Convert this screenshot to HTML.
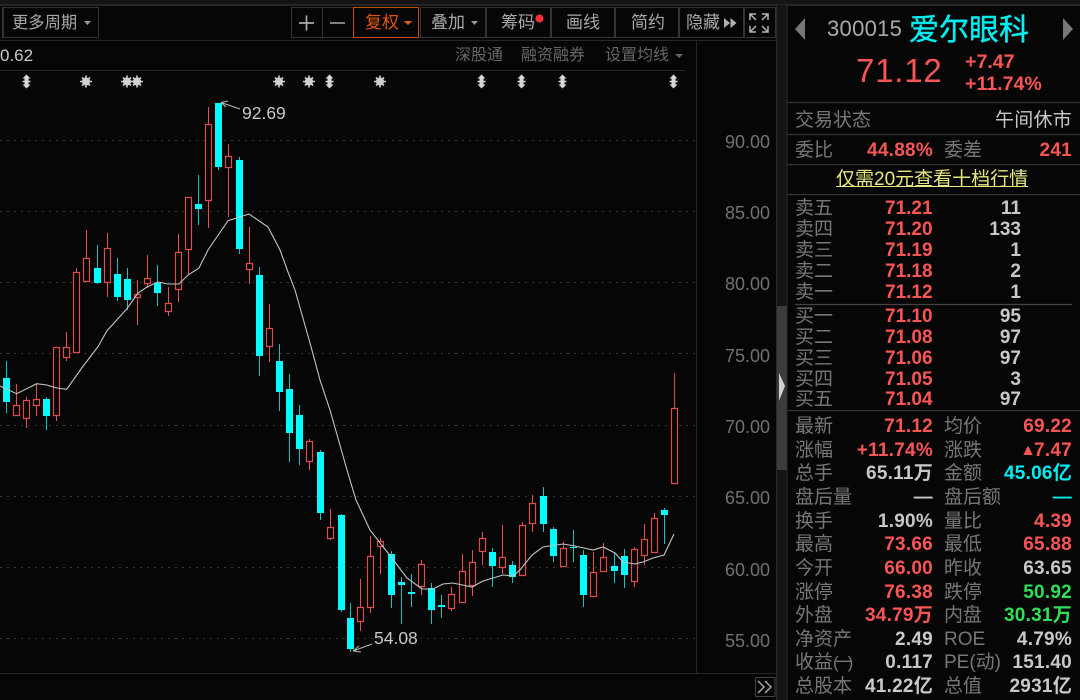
<!DOCTYPE html>
<html lang="zh">
<head>
<meta charset="utf-8">
<title>爱尔眼科 300015</title>
<style>
html,body{margin:0;padding:0;background:#060606;}
body{position:relative;width:1080px;height:700px;overflow:hidden;font-family:"Liberation Sans","Noto Sans CJK SC",sans-serif;color:#aaa;}
svg.g{position:absolute;left:0;top:0;}
.t{position:absolute;white-space:nowrap;}
.tb{font-size:17px;line-height:24px;top:11px;color:#a8a8a8;}
.s2{font-size:16px;line-height:24px;top:44px;color:#666;}
.ax{left:725px;font-size:18px;line-height:24px;color:#717171;}
.an{font-size:17.500px;line-height:24px;color:#c8c8c8;}
.r{position:absolute;left:795px;width:277px;height:24px;margin-top:1px;line-height:24px;font-size:19px;color:#777;white-space:nowrap;}
.r span{position:absolute;top:0;}
.a{left:0;}
.b{right:139px;font-weight:bold;letter-spacing:.25px;}
.c{left:149px;}
.d{right:0;font-weight:bold;letter-spacing:.25px;}
.R{color:#f95555;}
.W{color:#c8c8c8;}
.C{color:#00eef0;}
.G{color:#2fe055;}
.p{left:90px;font-weight:bold;color:#f95555;}
.q{right:51px;font-weight:bold;color:#c8c8c8;}
.tri{font-size:16px;position:static!important;letter-spacing:-2px;vertical-align:1px;}
.par{position:static!important;letter-spacing:-4px;font-size:17px;}
</style>
</head>
<body>
<svg class="g" width="1080" height="700" viewBox="0 0 1080 700">
<defs>
<g id="st"><circle r="4" fill="#d0d0d0"/><path d="M0-6V6M-6 0H6M-4-4L4 4M-4 4L4-4" stroke="#d0d0d0" stroke-width="1.6"/></g>
<path id="ud" d="M0-7L4-3H2V-.8H4V.8H2V3H4L0 7L-4 3H-2V.8H-4V-.8H-2V-3H-4Z" fill="#d8d8d8"/>
</defs>
<!-- frame -->
<rect x="0" y="0" width="1080" height="4" fill="#141414"/>
<rect x="0" y="4" width="1080" height="2" fill="#262626"/>
<rect x="777" y="5" width="10" height="695" fill="#151515"/>
<rect x="776" y="306" width="11" height="164" fill="#3c3c3c"/>
<path d="M779 373L785 386L779 401Z" fill="#d0d0d0"/>
<path d="M776.500 5V700M787 5V700" stroke="#2a2a2a" stroke-width="1"/>
<path d="M0 40.500H776M0 70.500H685M696.500 40V673M0 673.500H776" stroke="#262626" stroke-width="1"/>
<!-- toolbar boxes -->
<g fill="none" stroke="#333" stroke-width="1">
<path d="M2.500 7V38"/>
<rect x="3.500" y="7.500" width="95" height="30"/>
<rect x="291.500" y="7.500" width="31" height="30"/>
<rect x="322.500" y="7.500" width="31" height="30"/>
<rect x="420.500" y="7.500" width="65" height="30"/>
<rect x="486.500" y="7.500" width="64" height="30"/>
<rect x="551.500" y="7.500" width="63" height="30"/>
<rect x="615.500" y="7.500" width="63" height="30"/>
<rect x="679.500" y="7.500" width="64" height="30"/>
<rect x="744.500" y="7.500" width="31" height="30"/>
</g>
<rect x="353.500" y="7.500" width="65" height="30" fill="none" stroke="#c4500f"/>
<path d="M299 23H314M306.500 15.500V30.500" stroke="#aaa" stroke-width="1.700"/>
<path d="M330 23H345" stroke="#999" stroke-width="1.700"/>
<path d="M84 21H91L87.500 25Z" fill="#999"/>
<path d="M404 21H412L408 25Z" fill="#e8600f"/>
<path d="M471 21H478L474.500 25Z" fill="#999"/>
<circle cx="539.500" cy="18.500" r="4" fill="#f5303a"/>
<path d="M724 18L730 23L724 28ZM730.500 18L736.500 23L730.500 28Z" fill="#b0b0b0"/>
<path d="M750 20V14H756M750 14L756 20M768 20V14H762M768 14L762 20M750 26V32H756M750 32L756 26M768 26V32H762M768 32L762 26" fill="none" stroke="#b4b4b4" stroke-width="1.500"/>
<path d="M675 54H683L679 58Z" fill="#666"/>
<!-- markers -->
<use href="#ud" x="26.500" y="81.500"/><use href="#st" x="86" y="81.500"/><use href="#st" x="127" y="81.500"/><use href="#st" x="137" y="81.500"/><use href="#st" x="279" y="81.500"/><use href="#st" x="309" y="81.500"/><use href="#ud" x="329.500" y="81.500"/><use href="#st" x="380" y="81.500"/><use href="#ud" x="481.500" y="81.500"/><use href="#ud" x="521.500" y="81.500"/><use href="#ud" x="562.500" y="81.500"/><use href="#ud" x="673.500" y="81.500"/>
<!-- grid -->
<path d="M0 140.500H700M0 211.500H700M0 282.500H700M0 353.500H700M0 425.500H700M0 496.500H700M0 567.500H700M0 638.500H700" stroke="#363636" stroke-width="1" stroke-dasharray="2 5"/>
<!-- red wicks -->
<path fill="none" stroke="#e85050" stroke-width="1" d="M16.500 384V405M26.500 397V400M26.500 418V428M36.500 384V399M36.500 405V416M56.500 415V421M66.500 332V347M66.500 357V361M76.500 268V272M86.500 230V258M107.500 233V248M107.500 282V297M137.500 280V294M137.500 297V325M147.500 255V278M147.500 283V288M168.500 287V303M168.500 311V316M178.500 234V252M178.500 289V302M188.500 249V275M208.500 107V124M208.500 200V228M228.500 144V156M228.500 167V217M249.500 227V263M249.500 269V284M269.500 304V328M269.500 346V362M309.500 439V441M309.500 461V470M330.500 509V527M330.500 538V540M360.500 579V607M360.500 621V631M370.500 536V556M370.500 607V613M380.500 538V541M380.500 546V574M421.500 560V564M421.500 586V595M451.500 587V594M451.500 608V611M462.500 554V571M462.500 602V603M472.500 550V562M472.500 585V596M482.500 532V538M482.500 551V565M502.500 525V557M502.500 567V574M522.500 522V525M532.500 495V503M532.500 523V532M563.500 542V548M563.500 566V567M593.500 552V572M593.500 596V597M603.500 543V557M603.500 571V572M634.500 547V549M634.500 581V587M644.500 524V539M644.500 555V565M654.500 513V518M654.500 552V553"/>
<path fill="none" stroke="#c04444" stroke-width="1.200" d="M674.500 373V408"/>
<!-- red bodies -->
<path fill="#070707" stroke="#e04c4c" stroke-width="1.150" d="M13.500 405.500h6v10h-6zM23.500 400.500h6v18h-6zM33.500 399.500h6v6h-6zM53.500 347.500h6v68h-6zM63.500 347.500h6v10h-6zM73.500 272.500h6v80h-6zM83.500 258.500h6v23h-6zM104.500 248.500h6v34h-6zM134.500 294.500h6v3h-6zM144.500 278.500h6v5h-6zM165.500 303.500h6v8h-6zM175.500 252.500h6v37h-6zM185.500 197.500h6v52h-6zM205.500 124.500h6v76h-6zM225.500 156.500h6v11h-6zM246.500 263.500h6v6h-6zM266.500 328.500h6v18h-6zM306.500 441.500h6v20h-6zM327.500 527.500h6v11h-6zM357.500 607.500h6v14h-6zM367.500 556.500h6v51h-6zM377.500 541.500h6v5h-6zM418.500 564.500h6v22h-6zM448.500 594.500h6v14h-6zM459.500 571.500h6v31h-6zM469.500 562.500h6v23h-6zM479.500 538.500h6v13h-6zM499.500 557.500h6v10h-6zM519.500 525.500h6v50h-6zM529.500 503.500h6v20h-6zM560.500 548.500h6v18h-6zM590.500 572.500h6v24h-6zM600.500 557.500h6v14h-6zM631.500 549.500h6v32h-6zM641.500 539.500h6v16h-6zM651.500 518.500h6v34h-6zM671.500 408.500h6v75h-6z"/>
<!-- cyan wicks -->
<path fill="none" stroke="#00c8c8" stroke-width="1" d="M6.500 361V413M46.500 397V430M97.500 245V284M117.500 258V301M127.500 268V310M157.500 265V306M198.500 175V225M218.500 103V170M239.500 157V254M259.500 267V376M279.500 344V411M289.500 374V462M299.500 405V465M320.500 450V520M341.500 514V612M350.500 603V652M391.500 551V608M401.500 577V624M411.500 574V607M431.500 583V624M441.500 595V618M492.500 548V587M512.500 561V583M543.500 487V532M553.500 527V562M573.500 530V562M583.500 550V607M614.500 553V583M624.500 549V588M664.500 508V544"/>
<!-- cyan bodies -->
<path fill="#00ffff" d="M3 378h7v24h-7zM43 399h7v17h-7zM94 268h7v15h-7zM114 274h7v23h-7zM124 279h7v21h-7zM154 283h7v10h-7zM195 204h7v5h-7zM215 103h7v64h-7zM236 160h7v89h-7zM256 275h7v81h-7zM276 361h7v31h-7zM286 389h7v44h-7zM296 415h7v34h-7zM317 452h7v61h-7zM338 515h7v95h-7zM347 618h7v31h-7zM388 554h7v41h-7zM398 582h7v3h-7zM408 592h7v2h-7zM428 588h7v22h-7zM438 605h7v2h-7zM489 552h7v14h-7zM509 565h7v12h-7zM540 496h7v28h-7zM550 529h7v27h-7zM570 547h7v1h-7zM580 555h7v40h-7zM611 566h7v5h-7zM621 556h7v19h-7zM661 510h7v5h-7z"/>
<!-- MA -->
<polyline fill="none" stroke="#c4c4c4" stroke-width="1.100" points="0,386 16.700,393.700 36.700,383.700 46.700,385 56.700,388 66.700,389.300 81.700,368 98,346.700 107,330.700 126.700,309 138,293 147,287 158,282 168,284 179,284 188,275 199,268 208,250 228,220.700 249,214 268,227 280,250 288,272 295,290 310,343 320,380 330,410 347,470 356,500 370,530 388,553 407,578 422,589 433,589 443,584 453,583 472,587 483,581 493,578 503,575 513,576 520,570 532,555 543,547 563,544 575,546 593,550 603,547 615,553 623,562 635,564 643,562 653,558 664,555 674,534"/>
<!-- annotation arrows -->
<path d="M240 109L221 102.500M221 102.500L228 101M221 102.500L226 107" fill="none" stroke="#b8b8b8" stroke-width="1"/>
<path d="M372 644L353 651M353 651L359 646M353 651L361 652" fill="none" stroke="#b8b8b8" stroke-width="1"/>
<!-- bottom >> -->
<rect x="755.500" y="677.500" width="19.500" height="19" rx="1" fill="none" stroke="#444"/>
<path d="M758 681L764 687L758 693M765 681L771 687L765 693" fill="none" stroke="#a8a8a8" stroke-width="1.500"/>
<!-- right panel -->
<path d="M805 18V40L795 29Z" fill="#777"/>
<path d="M1063 18V40L1073 29Z" fill="#777"/>
<path d="M787 102.500H1080M787 134.500H1080M787 164.500H1080M787 194.500H1080M787 410.500H1080" stroke="#333" stroke-width="1.300"/>
<path d="M795 304.500H1072" stroke="#444" stroke-width="1.300"/>
</svg>

<!-- toolbar text -->
<div class="t tb" style="left:12px;font-size:16.300px;">更多周期</div>
<div class="t tb" style="left:365px;color:#e0580f;">复权</div>
<div class="t tb" style="left:431px;">叠加</div>
<div class="t tb" style="left:501px;">筹码</div>
<div class="t tb" style="left:566px;">画线</div>
<div class="t tb" style="left:631px;">简约</div>
<div class="t tb" style="left:686px;">隐藏</div>
<div class="t s2" style="left:455px;">深股通</div>
<div class="t s2" style="left:521px;">融资融券</div>
<div class="t s2" style="left:605px;">设置均线</div>
<div class="t" style="left:0;top:44px;font-size:17px;line-height:24px;color:#c8c8c8;">0.62</div>

<!-- axis -->
<div class="t ax" style="top:130px;">90.00</div>
<div class="t ax" style="top:201px;">85.00</div>
<div class="t ax" style="top:272px;">80.00</div>
<div class="t ax" style="top:344px;">75.00</div>
<div class="t ax" style="top:415px;">70.00</div>
<div class="t ax" style="top:486px;">65.00</div>
<div class="t ax" style="top:558px;">60.00</div>
<div class="t ax" style="top:629px;">55.00</div>
<div class="t an" style="left:242px;top:101px;">92.69</div>
<div class="t an" style="left:374px;top:626px;">54.08</div>

<!-- right header -->
<div class="t" style="left:827px;top:15px;font-size:22px;line-height:28px;letter-spacing:.3px;color:#aaa;">300015</div>
<div class="t" style="left:909px;top:11px;font-size:30px;line-height:40px;-webkit-text-stroke:.4px #00eef0;color:#00eef0;">爱尔眼科</div>
<div class="t" style="left:856px;top:51px;font-size:33px;line-height:40px;letter-spacing:.8px;color:#f95555;">71.12</div>
<div class="t" style="left:965px;top:51px;font-size:19.600px;line-height:22px;font-weight:bold;color:#f95555;">+7.47</div>
<div class="t" style="left:965px;top:73px;font-size:19.600px;line-height:22px;font-weight:bold;color:#f95555;">+11.74%</div>

<div class="r" style="top:108px;"><span class="a">交易状态</span><span class="d W" style="font-weight:normal;">午间休市</span></div>
<div class="r" style="top:138px;"><span class="a">委比</span><span class="b R">44.88%</span><span class="c">委差</span><span class="d R">241</span></div>
<div class="t" style="left:836px;top:168px;font-size:19px;line-height:24px;color:#e8e880;text-decoration:underline;">仅需20元查看十档行情</div>

<!-- order book -->
<div class="r" style="top:196px;"><span class="a">卖五</span><span class="p">71.21</span><span class="q">11</span></div>
<div class="r" style="top:217px;"><span class="a">卖四</span><span class="p">71.20</span><span class="q">133</span></div>
<div class="r" style="top:238px;"><span class="a">卖三</span><span class="p">71.19</span><span class="q">1</span></div>
<div class="r" style="top:259px;"><span class="a">卖二</span><span class="p">71.18</span><span class="q">2</span></div>
<div class="r" style="top:280px;"><span class="a">卖一</span><span class="p">71.12</span><span class="q">1</span></div>
<div class="r" style="top:304px;"><span class="a">买一</span><span class="p">71.10</span><span class="q">95</span></div>
<div class="r" style="top:325px;"><span class="a">买二</span><span class="p">71.08</span><span class="q">97</span></div>
<div class="r" style="top:346px;"><span class="a">买三</span><span class="p">71.06</span><span class="q">97</span></div>
<div class="r" style="top:367px;"><span class="a">买四</span><span class="p">71.05</span><span class="q">3</span></div>
<div class="r" style="top:387px;"><span class="a">买五</span><span class="p">71.04</span><span class="q">97</span></div>

<!-- stats -->
<div class="r" style="top:414px;"><span class="a">最新</span><span class="b R">71.12</span><span class="c">均价</span><span class="d R">69.22</span></div>
<div class="r" style="top:438px;"><span class="a">涨幅</span><span class="b R">+11.74%</span><span class="c">涨跌</span><span class="d R"><span class="tri">▲</span>7.47</span></div>
<div class="r" style="top:461px;"><span class="a">总手</span><span class="b W">65.11万</span><span class="c">金额</span><span class="d C">45.06亿</span></div>
<div class="r" style="top:485px;"><span class="a">盘后量</span><span class="b W">—</span><span class="c">盘后额</span><span class="d C">—</span></div>
<div class="r" style="top:509px;"><span class="a">换手</span><span class="b W">1.90%</span><span class="c">量比</span><span class="d R">4.39</span></div>
<div class="r" style="top:532px;"><span class="a">最高</span><span class="b R">73.66</span><span class="c">最低</span><span class="d R">65.88</span></div>
<div class="r" style="top:556px;"><span class="a">今开</span><span class="b R">66.00</span><span class="c">昨收</span><span class="d W">63.65</span></div>
<div class="r" style="top:580px;"><span class="a">涨停</span><span class="b R">76.38</span><span class="c">跌停</span><span class="d G">50.92</span></div>
<div class="r" style="top:603px;"><span class="a">外盘</span><span class="b R">34.79万</span><span class="c">内盘</span><span class="d G">30.31万</span></div>
<div class="r" style="top:627px;"><span class="a">净资产</span><span class="b W">2.49</span><span class="c">ROE</span><span class="d W">4.79%</span></div>
<div class="r" style="top:650px;"><span class="a">收益<span class="par">(一)</span></span><span class="b W">0.117</span><span class="c">PE(动)</span><span class="d W">151.40</span></div>
<div class="r" style="top:674px;"><span class="a">总股本</span><span class="b W">41.22亿</span><span class="c">总值</span><span class="d W">2931亿</span></div>
</body>
</html>
